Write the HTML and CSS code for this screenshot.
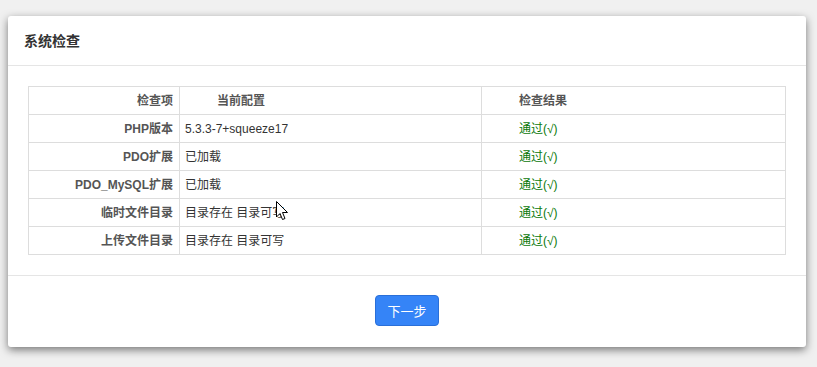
FILE: index.html
```html
<!DOCTYPE html>
<html lang="zh-CN">
<head>
  <meta charset="UTF-8" />
  <title>系统检查</title>
  <link rel="stylesheet" href="styles.css">
</head>
<body>

  <div class="modal">
    <div class="modal-header">
      <h4>系统检查</h4>
    </div>

    <div class="modal-body">
      <table class="check">
        <colgroup>
          <col class="col-item">
          <col class="col-conf">
          <col>
        </colgroup>
        <tr>
          <th class="item">检查项</th>
          <th class="conf">当前配置</th>
          <th class="result">检查结果</th>
        </tr>
        <tr>
          <td class="item">PHP版本</td>
          <td class="conf">5.3.3-7+squeeze17</td>
          <td class="result"><span class="ok">通过(√)</span></td>
        </tr>
        <tr>
          <td class="item">PDO扩展</td>
          <td class="conf">已加载</td>
          <td class="result"><span class="ok">通过(√)</span></td>
        </tr>
        <tr>
          <td class="item">PDO_MySQL扩展</td>
          <td class="conf">已加载</td>
          <td class="result"><span class="ok">通过(√)</span></td>
        </tr>
        <tr>
          <td class="item">临时文件目录</td>
          <td class="conf">目录存在 目录可写</td>
          <td class="result"><span class="ok">通过(√)</span></td>
        </tr>
        <tr>
          <td class="item">上传文件目录</td>
          <td class="conf">目录存在 目录可写</td>
          <td class="result"><span class="ok">通过(√)</span></td>
        </tr>
      </table>
    </div>

    <div class="modal-footer">
      <button type="button" class="siguiente">下一步</button>
    </div>
  </div>

  <svg class="cursor" width="13" height="21" viewBox="0 0 13 21">
    <path d="M0.5 0.5 L0.5 16 L4 12.5 L6.5 18.5 L9 17.5 L6.5 11.5 L11.5 11.5 Z" fill="#fff" stroke="#000" stroke-width="1"/>
  </svg>

</body>
</html>
```

FILE: styles.css
```css
body {
  background: #f0f0f0;
  font-family: 'Liberation Sans', 'Noto Sans CJK SC', sans-serif;
  font-size: 12px;
  color: #333;
  margin: 0;
  padding: 16px 11px 20px 8px;
}

.modal {
  background: #fff;
  border-radius: 3px;
  box-shadow: 0 3px 9px rgba(0,0,0,0.5);
}

.modal-header {
  padding: 15px 16px 14px;
  border-bottom: 1px solid #e5e5e5;
}

.modal-header h4 {
  margin: 0;
  font-size: 14px;
  line-height: 20px;
  font-weight: bold;
  color: #333;
}

.modal-body {
  padding: 20px 20px;
}

.check {
  width: 100%;
  border-collapse: collapse;
  table-layout: fixed;
}

.col-item {
  width: 151px;
}

.col-conf {
  width: 302px;
}

.check th,
.check td {
  border: 1px solid #ddd;
  height: 27px;
  padding: 0 6px;
  line-height: 16px;
}

.check th {
  font-weight: bold;
  color: #555;
}

.check .item {
  text-align: right;
  font-weight: bold;
  color: #555;
}

.check .conf {
  text-align: left;
  padding-left: 5px;
}

.check th.conf,
.check .result {
  padding-left: 37px;
  text-align: left;
}

.ok {
  color: #0a780a;
}

.modal-footer {
  display: flex;
  justify-content: center;
  padding: 19px 20px 21px;
  border-top: 1px solid #e5e5e5;
}

.siguiente {
  width: 64px;
  height: 31px;
  background-color: #3584f7;
  border: 1px solid #2a6fd8;
  border-radius: 4px;
  color: white;
  font-family: 'Noto Sans CJK SC', sans-serif;
  font-size: 13px;
  cursor: pointer;
}

.cursor {
  position: absolute;
  left: 276px;
  top: 201px;
}
```
